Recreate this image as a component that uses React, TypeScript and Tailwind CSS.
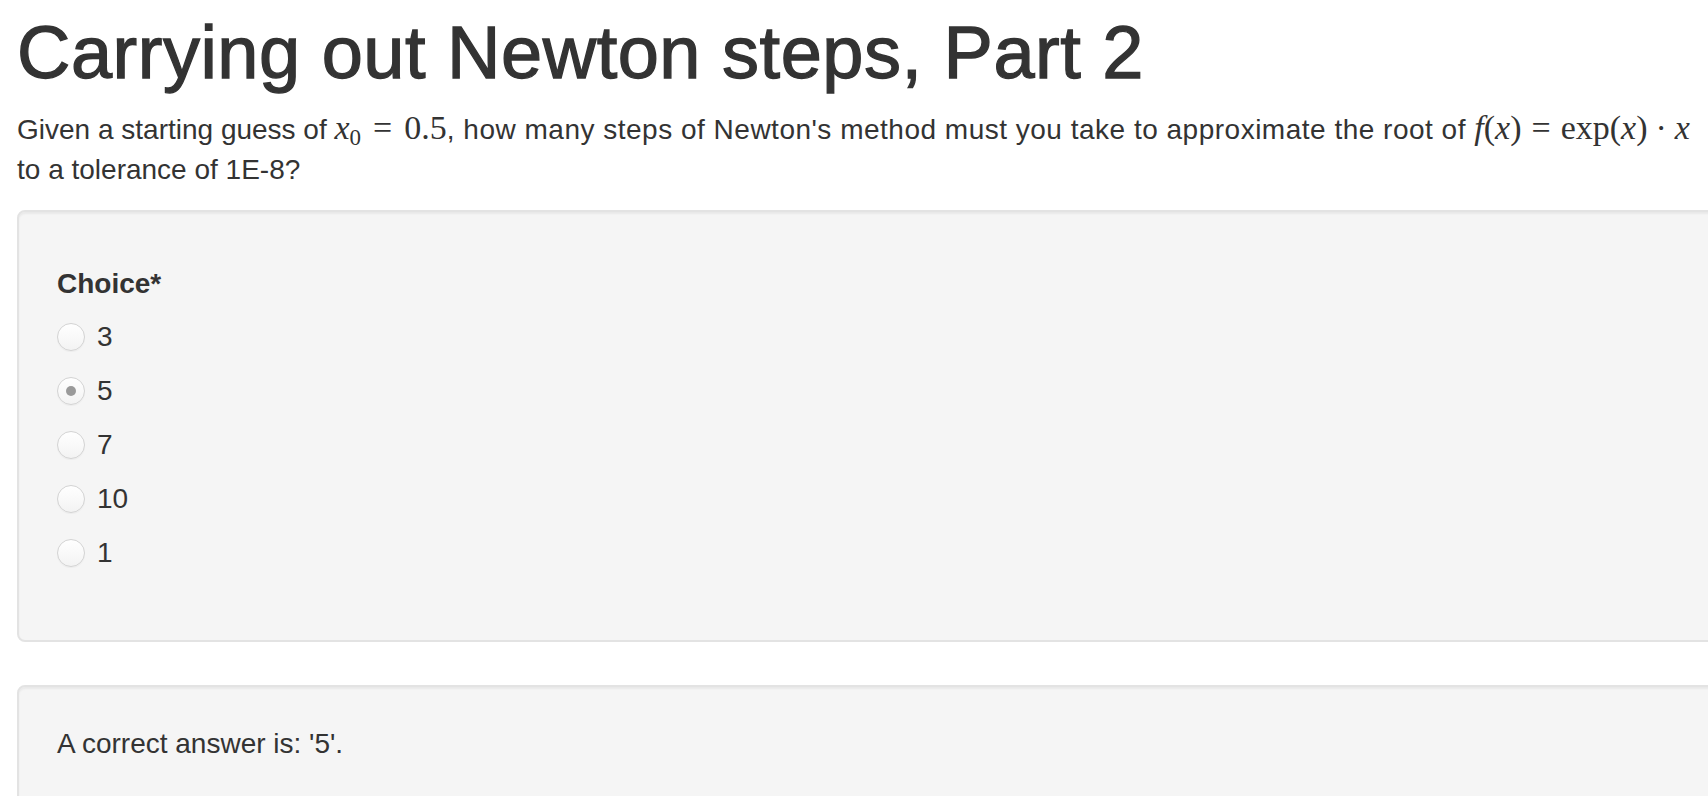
import React from "react";

const Radio = ({ checked }: { checked?: boolean }) => (
  <span className="flex h-[28px] w-[28px] shrink-0 items-center justify-center rounded-full border border-[#d3d3d3] bg-gradient-to-b from-[#ffffff] to-[#f3f3f3] shadow-[0_1px_1px_rgba(0,0,0,0.04)]">
    {checked ? <span className="h-[10px] w-[10px] rounded-full bg-[#9a9a9a]" /> : null}
  </span>
);

const M = ({ children, italic }: { children: React.ReactNode; italic?: boolean }) => (
  <span className={`font-['Liberation_Serif',serif] text-[34px] leading-none ${italic ? "italic" : ""}`}>{children}</span>
);

export default function App() {
  const choices = ["3", "5", "7", "10", "1"];
  return (
    <div className="h-[796px] w-full overflow-hidden bg-white font-['Liberation_Sans',Arial,sans-serif] text-[#333333]">
      <div className="w-[1760px] pl-[17px]">
        <h1 className="pt-[13px] text-[74px] font-normal leading-[80px] tracking-[0.5px] [-webkit-text-stroke:1.3px_#333333]">
          Carrying out Newton steps, Part 2
        </h1>
        <p className="mt-[17px] text-[28px] leading-[40px]">
          Given a starting guess of{" "}
          <M italic>x</M>
          <span className="relative top-[6px] font-['Liberation_Serif',serif] text-[23px] leading-none">0</span>
          <span className="ml-[12px] mr-[12px]"><M>=</M></span>
          <M>0.5</M>
          <span className="tracking-[0.5px]">, how many steps of Newton's method must you take to approximate the root of </span>
          <M italic>f</M>
          <M>(</M>
          <M italic>x</M>
          <M>)</M>
          <span className="ml-[10px] mr-[10px]"><M>=</M></span>
          <M>exp(</M>
          <M italic>x</M>
          <M>)</M>
          <span className="ml-[8px] mr-[8px]"><M>·</M></span>
          <M italic>x</M>
          <br />
          to a tolerance of 1E-8?
        </p>

        <div className="mt-[20px] rounded-[8px] border-2 border-[#e3e3e3] bg-[#f5f5f5] pb-[67px] pl-[38px] pt-[52px] shadow-[inset_0_2px_2px_rgba(0,0,0,0.05)]">
          <div className="h-[40px] text-[28px] font-bold leading-[40px]">Choice*</div>
          <div className="mt-[13px] flex flex-col gap-[14px]">
            {choices.map((c) => (
              <div key={c} className="flex h-[40px] items-center text-[28px] leading-[40px]">
                <Radio checked={c === "5"} />
                <span className="ml-[12px]">{c}</span>
              </div>
            ))}
          </div>
        </div>

        <div className="mt-[43px] h-[200px] rounded-[8px] border-2 border-[#e3e3e3] bg-[#f5f5f5] pl-[38px] pt-[37px] shadow-[inset_0_2px_2px_rgba(0,0,0,0.05)]">
          <div className="text-[28px] leading-[40px]">A correct answer is: '5'.</div>
        </div>
      </div>
    </div>
  );
}
